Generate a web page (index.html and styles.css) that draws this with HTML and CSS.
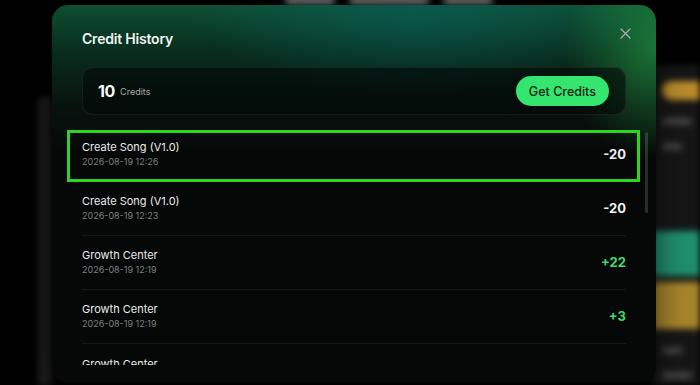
FILE: index.html
```html
<!DOCTYPE html>
<html lang="en">
<head>
  <meta charset="UTF-8" />
  <meta name="viewport" content="width=device-width, initial-scale=1.0"/>
  <title>Credit History</title>
  <link rel="stylesheet" href="styles.css">
</head>
<body>

  <div class="backdrop">
    <div class="bd-top">
      <span class="bd-word"></span>
      <span class="bd-word wide"></span>
      <span class="bd-word"></span>
    </div>
    <div class="bd-body">
      <div class="bd-left"></div>
      <div class="bd-main"></div>
      <div class="bd-right">
        <span class="bd-pill"></span>
        <span class="bd-line"></span>
        <span class="bd-line short"></span>
        <div class="bd-block teal"></div>
        <div class="bd-block gold"></div>
        <span class="bd-line short"></span>
        <span class="bd-line"></span>
      </div>
    </div>
  </div>

  <div class="modal">
    <div class="modal-head">
      <h2>Credit History</h2>
      <button class="close" aria-label="Close">
        <svg width="11" height="11" viewBox="0 0 11 11"><path d="M1 1L10 10M10 1L1 10" stroke="currentColor" stroke-width="1.2" stroke-linecap="round"/></svg>
      </button>
    </div>

    <div class="balance">
      <span class="balance-num">10</span>
      <span class="balance-unit">Credits</span>
      <button class="get-credits">Get Credits</button>
    </div>

    <div class="history-wrap">
      <ul class="history">
        <li class="entry marked">
          <div><p class="entry-title">Create Song (V1.0)</p><p class="entry-date">2026-08-19 12:26</p></div>
          <span class="amount">-20</span>
        </li>
        <li class="entry">
          <div><p class="entry-title">Create Song (V1.0)</p><p class="entry-date">2026-08-19 12:23</p></div>
          <span class="amount">-20</span>
        </li>
        <li class="entry">
          <div><p class="entry-title">Growth Center</p><p class="entry-date">2026-08-19 12:19</p></div>
          <span class="amount plus">+22</span>
        </li>
        <li class="entry">
          <div><p class="entry-title">Growth Center</p><p class="entry-date">2026-08-19 12:19</p></div>
          <span class="amount plus">+3</span>
        </li>
        <li class="entry">
          <div><p class="entry-title">Growth Center</p></div>
        </li>
      </ul>
      <span class="scroll-thumb"></span>
    </div>
  </div>

</body>
</html>
```

FILE: styles.css
```css
* {
  box-sizing: border-box;
}

body {
  margin: 0;
  width: 700px;
  height: 385px;
  overflow: hidden;
  background-color: #000;
  font-family: Inter, "Liberation Sans", sans-serif;
  color: #eee;
  position: relative;
}

p {
  margin: 0;
}

button {
  font-family: inherit;
  border: none;
  cursor: pointer;
}

/* page behind the dialog, blurred */

.backdrop {
  height: 385px;
  display: flex;
  flex-direction: column;
  filter: blur(3px);
}

.bd-top {
  display: flex;
  gap: 14px;
  height: 12px;
  padding-left: 285px;
  margin-top: -3px;
}

.bd-word {
  width: 50px;
  height: 8px;
  border-radius: 4px;
  background-color: #8a8a8a;
}

.bd-word.wide {
  width: 80px;
}

.bd-body {
  flex: 1;
  display: flex;
}

.bd-left {
  width: 14px;
  margin: 88px 0 0 38px;
  background-color: #1c1c1c;
  border-radius: 6px 0 0 0;
}

.bd-main {
  flex: 1;
}

.bd-right {
  width: 48px;
  margin-top: 56px;
  padding: 16px 0 0 10px;
  background-color: #161616;
  display: flex;
  flex-direction: column;
  gap: 10px;
}

.bd-pill {
  height: 19px;
  border-radius: 9px 0 0 9px;
  background-color: #b98b2c;
}

.bd-line {
  height: 7px;
  margin-top: 8px;
  width: 30px;
  border-radius: 3px;
  background-color: #444;
}

.bd-line.short {
  width: 20px;
}

.bd-block {
  height: 45px;
  margin-left: -10px;
}

.bd-block.teal {
  margin-top: 71px;
  background-color: #1f8e6b;
}

.bd-block.gold {
  margin-top: -4px;
  height: 47px;
  background-color: #a6842c;
}

/* dialog */

.modal {
  position: absolute;
  left: 52px;
  top: 5px;
  width: 604px;
  height: 378px;
  padding: 22px 30px 0;
  border-radius: 16px;
  overflow: hidden;
  background:
    radial-gradient(ellipse 90px 110px at 100% 12%, rgba(40, 170, 75, 0.55), transparent),
    radial-gradient(ellipse 230px 90px at 60% 0%, rgba(8, 95, 90, 0.7), transparent),
    linear-gradient(180deg, rgba(14, 82, 52, 0.95) 0, rgba(10, 62, 40, 0.7) 45px, rgba(8, 30, 20, 0.5) 100px, transparent 150px),
    #060707;
  box-shadow: 0 0 30px rgba(0, 0, 0, 0.6);
}

.modal-head {
  display: flex;
  justify-content: space-between;
  align-items: center;
  height: 22px;
}

.modal-head h2 {
  margin: 0;
  font-size: 14px;
  font-weight: 600;
  color: #f1f3f1;
  letter-spacing: -0.2px;
}

.close {
  background: none;
  color: #a9b1ad;
  padding: 0;
  margin-right: -5px;
  margin-top: -10px;
  display: flex;
}

.balance {
  margin-top: 18px;
  height: 48px;
  display: flex;
  align-items: center;
  padding: 0 16px 0 15px;
  border-radius: 11px;
  background-color: rgba(4, 8, 6, 0.6);
  border: 1px solid rgba(255, 255, 255, 0.07);
}

.balance-num {
  font-size: 16px;
  font-weight: 700;
  color: #fff;
  letter-spacing: -0.3px;
}

.balance-unit {
  margin-left: 5px;
  font-size: 9px;
  color: #a4a8a6;
}

.get-credits {
  margin-left: auto;
  height: 30px;
  padding: 0 13px;
  border-radius: 15px;
  background-color: #34e66f;
  color: #0c2514;
  font-size: 12.5px;
  font-weight: 500;
}

.history-wrap {
  position: relative;
  margin-top: 13px;
  height: 237px;
  clip-path: inset(0 -30px 0 -30px);
}

.history {
  list-style: none;
  margin: 0;
  padding: 0;
}

.scroll-thumb {
  position: absolute;
  top: 4px;
  right: -22px;
  width: 3px;
  height: 81px;
  border-radius: 2px;
  background-color: rgba(255, 255, 255, 0.15);
}

.entry {
  position: relative;
  height: 54px;
  display: flex;
  align-items: center;
  justify-content: space-between;
  border-bottom: 1px solid rgba(255, 255, 255, 0.07);
  padding-bottom: 1px;
}

.entry.marked::after {
  content: "";
  position: absolute;
  top: 2px;
  bottom: -1px;
  left: -15px;
  right: -14px;
  border: 3px solid #2ed41f;
}

.entry:last-child {
  align-items: flex-start;
  padding-top: 13px;
}

.entry-title {
  font-size: 11px;
  line-height: 14px;
  color: #e9ebea;
}

.entry-date {
  margin-top: 1px;
  font-size: 9px;
  line-height: 13px;
  color: #7e807f;
}

.amount {
  font-size: 13px;
  font-weight: 700;
  color: #f2f2f2;
}

.amount.plus {
  color: #3fdc6c;
}
```
